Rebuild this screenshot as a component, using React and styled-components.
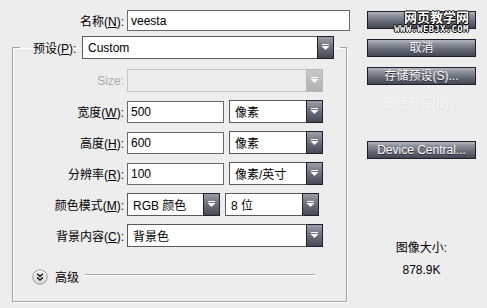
import { Fragment } from "react";
import styled, { createGlobalStyle } from "styled-components";

const GlobalStyle = createGlobalStyle`
  body {
    margin: 0;
    background: #ededed;
    font-family: "Liberation Sans", "Noto Sans CJK SC", sans-serif;
    font-size: 12px;
    color: #000;
  }
`;

const Dialog = styled.div`
  width: 487px;
  height: 308px;
  display: flex;
`;

const Main = styled.div`
  width: 355px;
  box-sizing: border-box;
  padding: 10px 0 0 12px;
`;

const NameRow = styled.div`
  display: grid;
  grid-template-columns: 112px 223px;
  column-gap: 3px;
  align-items: center;
`;

const Label = styled.label`
  text-align: right;
  white-space: nowrap;
  color: ${(p) => (p.disabled ? "#a9a9a9" : "#000")};
`;

const TextInput = styled.div`
  box-sizing: border-box;
  height: ${(p) => p.h || 22}px;
  width: ${(p) => (p.w ? `${p.w}px` : "auto")};
  background: #fff;
  border: 1px solid #6a6a6a;
  padding-left: 3px;
  display: flex;
  align-items: center;
`;

const Group = styled.fieldset`
  margin: 5px 0 0 0;
  width: 335px;
  box-sizing: border-box;
  padding: 0 0 16px 0;
  border: 1px solid #a3a3a3;
  box-shadow: inset 1px 1px 0 #fff, 1px 1px 0 #fff;
`;

const Legend = styled.legend`
  margin-left: 7px;
  width: 320px;
  box-sizing: border-box;
  padding: 0 6px 0 13px;
  display: flex;
  align-items: center;
  justify-content: space-between;
`;

const Rows = styled.div`
  margin-top: 10px;
  display: grid;
  grid-template-columns: 111px auto;
  column-gap: 3px;
  row-gap: 8px;
  align-items: center;
`;

const Controls = styled.div`
  display: flex;
  gap: 5px;
  align-items: center;
`;

const SelectBox = styled.div`
  box-sizing: border-box;
  width: ${(p) => p.w}px;
  height: 23px;
  display: flex;
  align-items: stretch;
  background: ${(p) => (p.disabled ? "#ededed" : "#fff")};
  border: 1px solid ${(p) => (p.disabled ? "#c4c4c4" : "#5a5a5a")};
  border-right: none;
`;

const SelectText = styled.span`
  flex: 1;
  padding-left: 5px;
  display: flex;
  align-items: center;
  white-space: nowrap;
`;

const DropButton = styled.span`
  width: 15px;
  margin: -1px 0;
  display: flex;
  align-items: center;
  justify-content: center;
  border: 1px solid ${(p) => (p.disabled ? "#b8b8b8" : "#1f2128")};
  background: ${(p) =>
    p.disabled
      ? "linear-gradient(#c8c8c8, #b2b2b2)"
      : "linear-gradient(#9a9ea8 0%, #6e737e 45%, #464a55 100%)"};
`;

const AdvancedRow = styled.div`
  margin-top: 21px;
  padding: 0 31px 0 19px;
  display: flex;
  align-items: center;
`;

const AdvancedText = styled.span`
  margin-left: 7px;
`;

const Rule = styled.div`
  flex: 1;
  margin: 0 0 4px 6px;
  height: 1px;
  background: #a8a8a8;
  box-shadow: 0 1px 0 #fff;
`;

const Side = styled.div`
  width: 132px;
  box-sizing: border-box;
  padding: 11px 0 0 12px;
  display: flex;
  flex-direction: column;
`;

const Button = styled.div`
  position: relative;
  box-sizing: border-box;
  width: 109px;
  height: 18px;
  margin-bottom: 10px;
  border: 1px solid #1d1f26;
  background: linear-gradient(
    #b4b8c0 0%,
    #8d929c 22%,
    #656a77 60%,
    #434754 100%
  );
  color: #fff;
  text-shadow: 0 1px 0 #2a2d36;
  font-size: 12px;
  line-height: 16px;
  text-align: center;
  white-space: nowrap;
`;

const GhostButton = styled.div`
  width: 109px;
  height: 18px;
  margin-bottom: 28px;
  color: #f7f7f7;
  text-shadow: 1px 1px 0 #e2e2e2;
  line-height: 18px;
  text-align: center;
  white-space: nowrap;
`;

const Watermark = styled.div`
  position: absolute;
  left: 36px;
  top: -1px;
  display: flex;
  flex-direction: column;
  align-items: center;
  color: #fff;
  line-height: 1;
  text-shadow: -1px 0 0 #000, 1px 0 0 #000, 0 -1px 0 #000, 0 1px 0 #000;
`;

const WatermarkTitle = styled.span`
  font-size: 13px;
  font-weight: bold;
`;

const WatermarkUrl = styled.span`
  margin-top: 1px;
  margin-left: -10px;
  font-family: "DejaVu Sans Mono", monospace;
  font-size: 9px;
  font-weight: bold;
  letter-spacing: 0.3px;
`;

const Info = styled.div`
  margin-top: 68px;
  width: 109px;
  text-align: center;
  line-height: 22px;
`;

function Arrow() {
  return (
    <svg width="9" height="7" viewBox="0 0 9 7">
      <rect x="1" y="0" width="7" height="1" fill="#fff" />
      <path d="M0.5 2h8L4.5 6z" fill="#fff" />
    </svg>
  );
}

function Select({ w, value, disabled }) {
  return (
    <SelectBox w={w} disabled={disabled}>
      <SelectText>{value}</SelectText>
      <DropButton disabled={disabled}>
        <Arrow />
      </DropButton>
    </SelectBox>
  );
}

function ExpandIcon() {
  return (
    <svg width="16" height="16" viewBox="0 0 16 16">
      <defs>
        <linearGradient id="exp" x1="0" y1="0" x2="0" y2="1">
          <stop offset="0" stopColor="#ffffff" />
          <stop offset="1" stopColor="#d6d6d6" />
        </linearGradient>
      </defs>
      <circle cx="8" cy="8" r="7.2" fill="url(#exp)" stroke="#9a9a9a" />
      <path
        d="M5 4.8l3 2.6 3-2.6M5 8.4l3 2.6 3-2.6"
        fill="none"
        stroke="#222"
        strokeWidth="1.5"
      />
    </svg>
  );
}

const rows = [
  { label: "宽度", key: "W", value: "500", unit: "像素" },
  { label: "高度", key: "H", value: "600", unit: "像素" },
  { label: "分辨率", key: "R", value: "100", unit: "像素/英寸" },
];

export default function App() {
  return (
    <>
      <GlobalStyle />
      <Dialog>
        <Main>
          <NameRow>
            <Label>
              名称(<u>N</u>):
            </Label>
            <TextInput h={21}>veesta</TextInput>
          </NameRow>

          <Group>
            <Legend>
              <Label>
                预设(<u>P</u>):
              </Label>
              <Select w={252} value="Custom" />
            </Legend>

            <Rows>
              <Label disabled>Size:</Label>
              <Select w={196} value="" disabled />

              {rows.map((r) => (
                <Fragment key={r.key}>
                  <Label>
                    {r.label}(<u>{r.key}</u>):
                  </Label>
                  <Controls>
                    <TextInput w={97}>{r.value}</TextInput>
                    <Select w={94} value={r.unit} />
                  </Controls>
                </Fragment>
              ))}

              <Label>
                颜色模式(<u>M</u>):
              </Label>
              <Controls>
                <Select w={93} value="RGB 颜色" />
                <Select w={94} value="8 位" />
              </Controls>

              <Label>
                背景内容(<u>C</u>):
              </Label>
              <Select w={196} value="背景色" />
            </Rows>

            <AdvancedRow>
              <ExpandIcon />
              <AdvancedText>高级</AdvancedText>
              <Rule />
            </AdvancedRow>
          </Group>
        </Main>

        <Side>
          <Button>
            <Watermark>
              <WatermarkTitle>网页教学网</WatermarkTitle>
              <WatermarkUrl>WWW.WEBJX.COM</WatermarkUrl>
            </Watermark>
          </Button>
          <Button>取消</Button>
          <Button>存储预设(S)...</Button>
          <GhostButton>删除预设(D)...</GhostButton>
          <Button>Device Central...</Button>
          <Info>
            <div>图像大小:</div>
            <div>878.9K</div>
          </Info>
        </Side>
      </Dialog>
    </>
  );
}
